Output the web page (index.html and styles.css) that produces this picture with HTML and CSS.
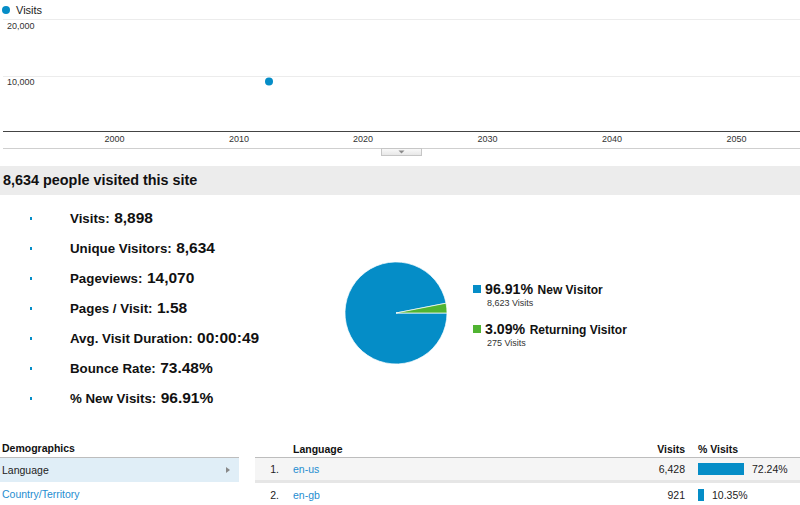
FILE: index.html
```html
<!DOCTYPE html>
<html>
<head>
<meta charset="utf-8">
<link rel="stylesheet" href="styles.css">
</head>
<body>
<div class="chart">
  <div class="legend"><span class="dot"></span><span>Visits</span></div>
  <svg class="plot" width="800" height="139" viewBox="0 19 800 139">
    <defs>
      <linearGradient id="tabg" x1="0" y1="0" x2="0" y2="1">
        <stop offset="0" stop-color="#fafafa"/>
        <stop offset="1" stop-color="#e6e6e6"/>
      </linearGradient>
    </defs>
    <line x1="3" y1="19.5" x2="800" y2="19.5" stroke="#ececec"/>
    <text x="7" y="29" class="ylab">20,000</text>
    <line x1="3" y1="76.5" x2="800" y2="76.5" stroke="#ececec"/>
    <text x="7" y="85" class="ylab">10,000</text>
    <circle cx="269" cy="81.5" r="4" fill="#058dc7"/>
    <line x1="3" y1="131.5" x2="800" y2="131.5" stroke="#444"/>
    <g class="xlab" text-anchor="middle">
      <text x="114.5" y="142">2000</text>
      <text x="239" y="142">2010</text>
      <text x="363" y="142">2020</text>
      <text x="487.5" y="142">2030</text>
      <text x="612" y="142">2040</text>
      <text x="736.5" y="142">2050</text>
    </g>
    <line x1="3" y1="148.5" x2="800" y2="148.5" stroke="#cfcfcf"/>
    <rect x="381.5" y="148.5" width="40" height="7" fill="url(#tabg)" stroke="#c6c6c6"/>
    <polygon points="398.5,150.5 404.5,150.5 401.5,153.5" fill="#8a8a8a"/>
  </svg>
</div>

<div class="summary">8,634 people visited this site</div>

<div class="overview">
  <ul class="metrics">
    <li><span class="bullet"></span><span class="mtext"><span class="lbl">Visits:</span> <span class="val">8,898</span></span></li>
    <li><span class="bullet"></span><span class="mtext"><span class="lbl">Unique Visitors:</span> <span class="val">8,634</span></span></li>
    <li><span class="bullet"></span><span class="mtext"><span class="lbl">Pageviews:</span> <span class="val">14,070</span></span></li>
    <li><span class="bullet"></span><span class="mtext"><span class="lbl">Pages / Visit:</span> <span class="val">1.58</span></span></li>
    <li><span class="bullet"></span><span class="mtext"><span class="lbl">Avg. Visit Duration:</span> <span class="val">00:00:49</span></span></li>
    <li><span class="bullet"></span><span class="mtext"><span class="lbl">Bounce Rate:</span> <span class="val">73.48%</span></span></li>
    <li><span class="bullet"></span><span class="mtext"><span class="lbl">% New Visits:</span> <span class="val">96.91%</span></span></li>
  </ul>
  <svg class="pie" width="102" height="102" viewBox="0 0 102 102">
    <path d="M51,51 L101.05,41.18 A51,51 0 1,0 102,51 Z" fill="#058dc7" stroke="#fff" stroke-width="0.7"/>
    <path d="M51,51 L102,51 A51,51 0 0,0 101.05,41.18 Z" fill="#50b432" stroke="#fff" stroke-width="0.7"/>
  </svg>
  <div class="pie-legend">
    <div class="entry">
      <div class="entry-main"><span class="sq blue"></span><span class="etext"><span class="pct">96.91%</span> <span class="name">New Visitor</span></span></div>
      <div class="entry-sub">8,623 Visits</div>
    </div>
    <div class="entry">
      <div class="entry-main"><span class="sq green"></span><span class="etext"><span class="pct">3.09%</span> <span class="name">Returning Visitor</span></span></div>
      <div class="entry-sub">275 Visits</div>
    </div>
  </div>
</div>

<div class="bottom">
  <div class="demo">
    <div class="demo-head">Demographics</div>
    <div class="demo-row active"><span>Language</span><span class="arrow"></span></div>
    <div class="demo-row"><a class="link">Country/Territory</a></div>
  </div>
  <div class="table">
    <div class="trow thead">
      <span></span><span>Language</span><span class="num">Visits</span><span>% Visits</span>
    </div>
    <div class="trow odd">
      <span class="num">1.</span><a class="link">en-us</a><span class="num">6,428</span>
      <span class="pctcell"><span class="bar" style="width:46px"></span><span class="ptxt">72.24%</span></span>
    </div>
    <div class="trow">
      <span class="num">2.</span><a class="link">en-gb</a><span class="num">921</span>
      <span class="pctcell"><span class="bar" style="width:6px"></span><span class="ptxt">10.35%</span></span>
    </div>
  </div>
</div>
</body>
</html>
```

FILE: styles.css
```css
html, body {
  margin: 0;
  padding: 0;
  background: #fff;
}
body {
  font-family: "Liberation Sans", Arial, sans-serif;
  color: #222;
  width: 800px;
  height: 505px;
  overflow: hidden;
}
.legend {
  height: 19px;
  display: flex;
  align-items: center;
  padding-left: 2px;
  font-size: 11px;
  color: #222;
}
.legend .dot {
  width: 8px;
  height: 8px;
  border-radius: 50%;
  background: #058dc7;
  margin-right: 6px;
}
.plot {
  display: block;
}
.ylab, .xlab text {
  font-family: "Liberation Sans", Arial, sans-serif;
  font-size: 9px;
  fill: #333;
}
.summary {
  margin-top: 8px;
  height: 29px;
  line-height: 29px;
  background: #ececec;
  padding-left: 3px;
  font-size: 14.4px;
  font-weight: bold;
  color: #111;
}
.overview {
  display: flex;
  align-items: flex-start;
  height: 245px;
}
.metrics {
  list-style: none;
  margin: 0;
  padding: 8px 0 0 0;
  width: 345px;
}
.metrics li {
  height: 30px;
  display: flex;
  align-items: center;
  font-weight: bold;
  color: #111;
}
.mtext {
  white-space: nowrap;
}
.bullet {
  width: 2px;
  height: 3px;
  background: #058dc7;
  margin-left: 30px;
  margin-right: 38px;
}
.lbl {
  font-size: 13.3px;
}
.val {
  font-size: 15.5px;
}
.pie {
  display: block;
  margin-top: 67px;
}
.pie-legend {
  margin-top: 86px;
  margin-left: 26px;
}
.entry + .entry {
  margin-top: 12px;
}
.entry-main {
  height: 16px;
  display: flex;
  align-items: center;
  font-weight: bold;
  color: #111;
}
.etext {
  white-space: nowrap;
}
.sq {
  width: 8px;
  height: 8px;
  margin-right: 4px;
}
.sq.blue { background: #058dc7; }
.sq.green { background: #50b432; }
.pct {
  font-size: 14.2px;
}
.name {
  font-size: 12px;
}
.entry-sub {
  height: 12px;
  line-height: 12px;
  font-size: 9px;
  padding-left: 14px;
  color: #333;
}
.bottom {
  display: flex;
  gap: 16px;
  font-size: 10.5px;
}
.demo {
  width: 239px;
}
.demo-head {
  height: 17px;
  line-height: 17px;
  font-weight: bold;
  padding-left: 2px;
  border-bottom: 1px solid #bdbdbd;
  color: #111;
}
.demo-row {
  height: 24px;
  display: flex;
  align-items: center;
  justify-content: space-between;
  padding: 0 9px 0 2px;
}
.demo-row.active {
  background: #e0eef7;
}
.arrow {
  width: 0;
  height: 0;
  border-top: 3px solid transparent;
  border-bottom: 3px solid transparent;
  border-left: 4px solid #888;
}
.link {
  color: #1f8dd0;
}
.table {
  flex: 1;
}
.trow {
  display: grid;
  grid-template-columns: 24px 1fr 50px 101px;
  column-gap: 14px;
  align-items: center;
  height: 24px;
}
.trow > :nth-child(4) {
  margin-left: -1px;
}
.trow.thead {
  height: 17px;
  font-weight: bold;
  border-bottom: 1px solid #bdbdbd;
  color: #111;
}
.trow.odd {
  height: 22px;
  background: #f5f5f5;
  border-bottom: 3px solid #e6e6e6;
}
.num {
  text-align: right;
}
.pctcell {
  display: flex;
  align-items: center;
}
.bar {
  height: 12px;
  background: #058dc7;
}
.ptxt {
  margin-left: 8px;
}
```
